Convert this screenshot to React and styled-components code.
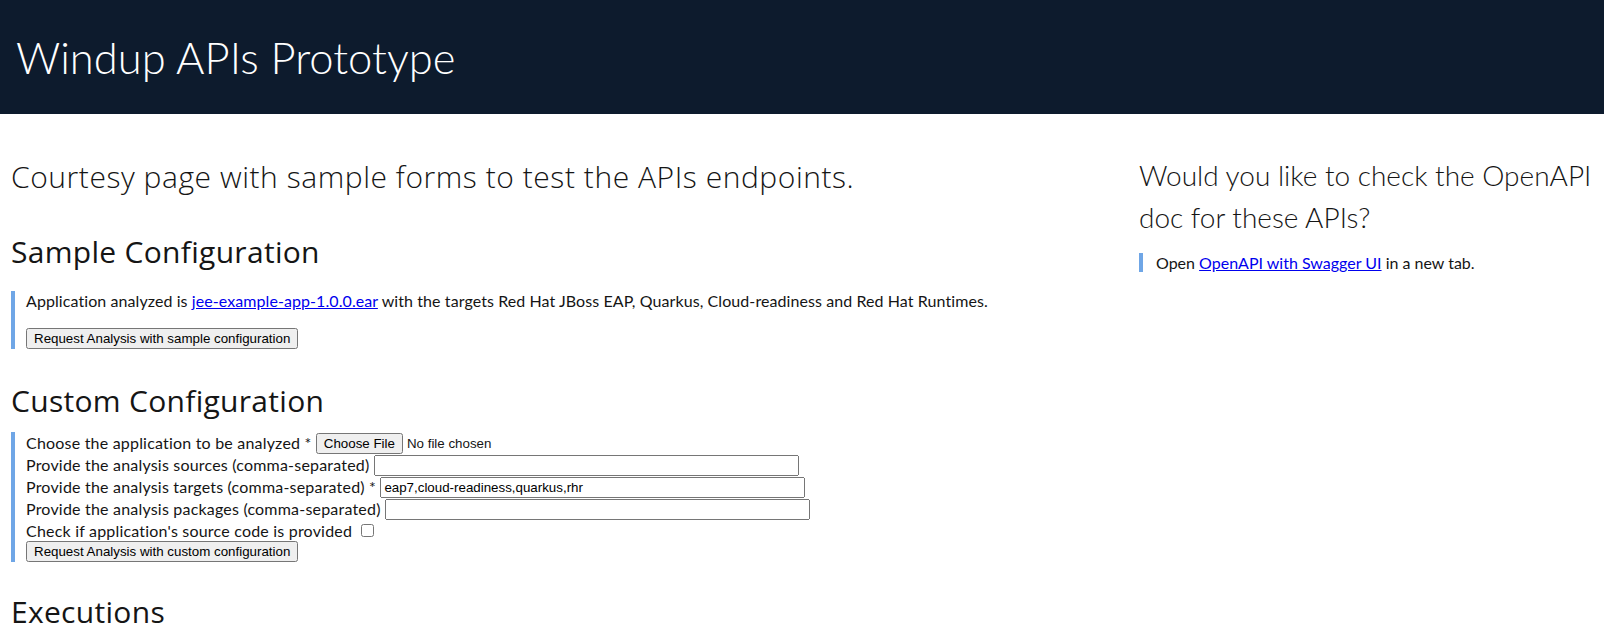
import React from 'react';
import styled, { createGlobalStyle } from 'styled-components';

const GlobalStyle = createGlobalStyle`
  html, body {
    margin: 0;
    padding: 0;
    background: #ffffff;
  }
  body {
    font-family: Lato, "Open Sans", sans-serif;
    color: #151515;
  }
`

const Masthead = styled.header`
  height: 114px;
  display: flex;
  align-items: center;
  padding-left: 16px;
  background-color: #0d1b2d;
`

const BrandTitle = styled.h1`
  margin: 0;
  font-size: 43.5px;
  line-height: 1.2;
  font-weight: 300;
  color: #ffffff;
`

const Main = styled.main`
  display: grid;
  grid-template-columns: 1128px 454px;
  padding: 0 11px;
`

const Column = styled.section`
  display: flex;
  flex-direction: column;
  align-items: flex-start;
`

const Lead = styled.p`
  margin: ${props => props.top}px 0 0;
  font-family: Lato, "Open Sans", sans-serif;
  font-size: 28px;
  line-height: 42px;
  font-weight: 300;
`

const WideLead = styled(Lead)`
  font-family: "Open Sans", Lato, sans-serif;
  font-size: 30px;
  letter-spacing: 0.55px;
`

const SectionTitle = styled.h2`
  margin: ${props => props.top}px 0 0;
  font-family: "Open Sans", Lato, sans-serif;
  font-size: 30px;
  line-height: 36px;
  font-weight: 400;
  letter-spacing: 0.3px;
`

const Quote = styled.div`
  margin-top: ${props => props.top}px;
  border-left: 4px solid #6fa6e6;
  padding-left: ${props => props.pad || 11}px;
  display: flex;
  flex-direction: column;
  align-items: flex-start;
  gap: ${props => props.gap || 0}px;
`

const Text = styled.p`
  margin: 0;
  font-size: 16px;
  line-height: 19px;
  letter-spacing: ${props => props.spacing || 0}px;
`

const Link = styled.a`
  color: #0000ee;
  text-decoration: underline;
`

const NativeButton = styled.button`
  font-family: "Liberation Sans", Arial, sans-serif;
  font-size: 13.333px;
  height: 21px;
`

const Field = styled.label`
  display: flex;
  align-items: center;
  height: ${props => props.short ? 21 : 22}px;
  font-size: 16px;
  line-height: 20px;
  letter-spacing: 0.2px;
  white-space: pre;
`

const TextInput = styled.input`
  box-sizing: border-box;
  width: 425px;
  height: 21px;
  letter-spacing: normal;
  font-family: "Liberation Sans", Arial, sans-serif;
  font-size: 13.333px;
`

const FileInput = styled.input`
  letter-spacing: normal;
  font-family: "Liberation Sans", Arial, sans-serif;
  font-size: 13.333px;
`

const Check = styled.input`
  margin: 0 0 0 9px;
  width: 13px;
  height: 13px;
`

export default function App() {
  return (
    <>
      <GlobalStyle />
      <Masthead>
        <BrandTitle>Windup APIs Prototype</BrandTitle>
      </Masthead>
      <Main>
        <Column>
          <WideLead top={42}>Courtesy page with sample forms to test the APIs endpoints.</WideLead>
          <SectionTitle top={36}>Sample Configuration</SectionTitle>
          <Quote top={21} gap={18}>
            <Text spacing={0.08}>
              Application analyzed is <Link href="#">jee-example-app-1.0.0.ear</Link> with the targets Red Hat JBoss EAP, Quarkus, Cloud-readiness and Red Hat Runtimes.
            </Text>
            <NativeButton type="button">Request Analysis with sample configuration</NativeButton>
          </Quote>
          <SectionTitle top={34}>Custom Configuration</SectionTitle>
          <Quote as="form" top={13} onSubmit={e => e.preventDefault()}>
            <Field>Choose the application to be analyzed * <FileInput type="file" /></Field>
            <Field>Provide the analysis sources (comma-separated) <TextInput type="text" /></Field>
            <Field>Provide the analysis targets (comma-separated) * <TextInput type="text" defaultValue="eap7,cloud-readiness,quarkus,rhr" /></Field>
            <Field>Provide the analysis packages (comma-separated) <TextInput type="text" /></Field>
            <Field short>Check if application's source code is provided<Check type="checkbox" /></Field>
            <NativeButton type="button">Request Analysis with custom configuration</NativeButton>
          </Quote>
          <SectionTitle top={32}>Executions</SectionTitle>
        </Column>
        <Column>
          <Lead top={40}>Would you like to check the OpenAPI doc for these APIs?</Lead>
          <Quote top={15} pad={13}>
            <Text>Open <Link href="#">OpenAPI with Swagger UI</Link> in a new tab.</Text>
          </Quote>
        </Column>
      </Main>
    </>
  )
}
